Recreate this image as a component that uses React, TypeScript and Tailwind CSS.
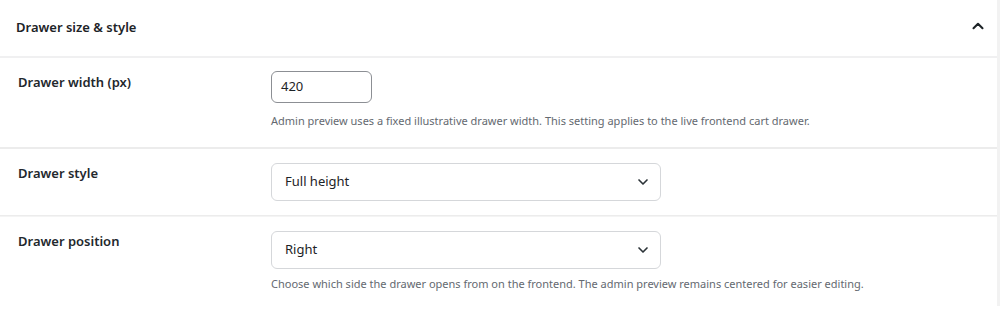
import { ChevronDown, ChevronUp } from 'lucide-react';

const font = { fontFamily: '"Noto Sans", "Open Sans", sans-serif' };

function Row({ label, children, last }: { label: string; children: React.ReactNode; last?: boolean }) {
  return (
    <div className={`flex ${last ? '' : 'border-b border-[#ececec]'}`}>
      <div className="w-[271px] shrink-0 pl-[18px] pt-[15px] text-[13px] font-semibold text-[#23282d]">{label}</div>
      <div className="flex-1 pt-[14px] pb-[14px]">{children}</div>
    </div>
  );
}

function Select({ value }: { value: string }) {
  return (
    <div className="flex h-[38px] w-[390px] items-center justify-between rounded-md border border-[#d5d7da] bg-white pl-[13px] pr-[9px] text-[13px] text-[#1d2327]">
      <span>{value}</span>
      <ChevronDown className="h-4 w-4 text-[#2c3338]" strokeWidth={2.5} />
    </div>
  );
}

export default function App() {
  return (
    <div className="h-[311px] w-[1000px] overflow-hidden bg-white" style={font}>
      <div className="border-r-[3px] border-[#f2f2f2] bg-white">
        <div className="flex h-[58px] items-center justify-between border-b-[2px] border-[#f0f0f1] pl-4 pr-[10px]">
          <h2 className="text-[13px] font-semibold text-[#1d2327]">Drawer size &amp; style</h2>
          <ChevronUp className="mb-[4px] h-[18px] w-[18px] text-[#1d2327]" strokeWidth={2.75} />
        </div>

        <div className="flex border-b-[2px] border-[#ececec]">
          <div className="w-[271px] shrink-0 pl-[18px] pt-[15px] text-[13px] font-semibold text-[#23282d]">Drawer width (px)</div>
          <div className="flex-1 pt-[13px] pb-[18px]">
            <div className="flex h-[32px] w-[101px] items-center rounded-md border border-[#8c8f94] px-[9px] text-[13px] text-[#1d2327]">420</div>
            <p className="mt-[10px] text-[11px] leading-4 text-[#646970]">
              Admin preview uses a fixed illustrative drawer width. This setting applies to the live frontend cart drawer.
            </p>
          </div>
        </div>

        <Row label="Drawer style">
          <Select value="Full height" />
        </Row>

        <div className="border-t border-[#f4f4f4]">
          <Row label="Drawer position" last>
            <Select value="Right" />
            <p className="mt-[7px] text-[11px] leading-4 text-[#646970]">
              Choose which side the drawer opens from on the frontend. The admin preview remains centered for easier editing.
            </p>
          </Row>
        </div>
      </div>
    </div>
  );
}
